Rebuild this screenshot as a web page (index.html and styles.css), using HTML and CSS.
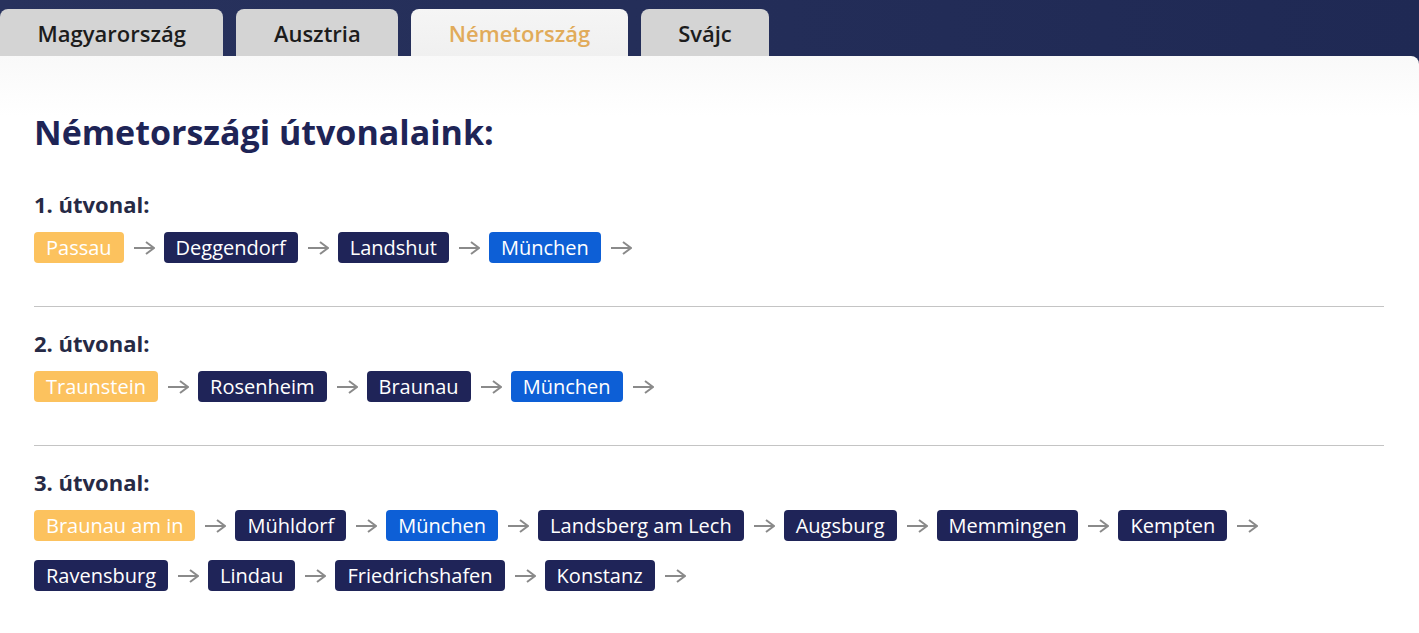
FILE: index.html
```html
<!DOCTYPE html>
<html lang="hu">
<head>
  <meta charset="UTF-8" />
  <title>Útvonalaink</title>
  <link rel="stylesheet" href="styles.css">
</head>
<body>

  <div class="tabs">
    <div class="tab">Magyarország</div>
    <div class="tab">Ausztria</div>
    <div class="tab active">Németország</div>
    <div class="tab">Svájc</div>
  </div>

  <div class="panel">
    <h1>Németországi útvonalaink:</h1>

    <div class="route">
      <h3>1. útvonal:</h3>
      <div class="stops">
        <span class="stop start">Passau</span><svg class="arrow" viewBox="0 0 22 14"><path d="M1 7H21M13 1L21 7L13 13"/></svg>
        <span class="stop">Deggendorf</span><svg class="arrow" viewBox="0 0 22 14"><path d="M1 7H21M13 1L21 7L13 13"/></svg>
        <span class="stop">Landshut</span><svg class="arrow" viewBox="0 0 22 14"><path d="M1 7H21M13 1L21 7L13 13"/></svg>
        <span class="stop hub">München</span><svg class="arrow" viewBox="0 0 22 14"><path d="M1 7H21M13 1L21 7L13 13"/></svg>
      </div>
    </div>

    <div class="route">
      <h3>2. útvonal:</h3>
      <div class="stops">
        <span class="stop start">Traunstein</span><svg class="arrow" viewBox="0 0 22 14"><path d="M1 7H21M13 1L21 7L13 13"/></svg>
        <span class="stop">Rosenheim</span><svg class="arrow" viewBox="0 0 22 14"><path d="M1 7H21M13 1L21 7L13 13"/></svg>
        <span class="stop">Braunau</span><svg class="arrow" viewBox="0 0 22 14"><path d="M1 7H21M13 1L21 7L13 13"/></svg>
        <span class="stop hub">München</span><svg class="arrow" viewBox="0 0 22 14"><path d="M1 7H21M13 1L21 7L13 13"/></svg>
      </div>
    </div>

    <div class="route">
      <h3>3. útvonal:</h3>
      <div class="stops">
        <span class="stop start">Braunau am in</span><svg class="arrow" viewBox="0 0 22 14"><path d="M1 7H21M13 1L21 7L13 13"/></svg>
        <span class="stop">Mühldorf</span><svg class="arrow" viewBox="0 0 22 14"><path d="M1 7H21M13 1L21 7L13 13"/></svg>
        <span class="stop hub">München</span><svg class="arrow" viewBox="0 0 22 14"><path d="M1 7H21M13 1L21 7L13 13"/></svg>
        <span class="stop">Landsberg am Lech</span><svg class="arrow" viewBox="0 0 22 14"><path d="M1 7H21M13 1L21 7L13 13"/></svg>
        <span class="stop">Augsburg</span><svg class="arrow" viewBox="0 0 22 14"><path d="M1 7H21M13 1L21 7L13 13"/></svg>
        <span class="stop">Memmingen</span><svg class="arrow" viewBox="0 0 22 14"><path d="M1 7H21M13 1L21 7L13 13"/></svg>
        <span class="stop">Kempten</span><svg class="arrow" viewBox="0 0 22 14"><path d="M1 7H21M13 1L21 7L13 13"/></svg>
        <span class="stop">Ravensburg</span><svg class="arrow" viewBox="0 0 22 14"><path d="M1 7H21M13 1L21 7L13 13"/></svg>
        <span class="stop">Lindau</span><svg class="arrow" viewBox="0 0 22 14"><path d="M1 7H21M13 1L21 7L13 13"/></svg>
        <span class="stop">Friedrichshafen</span><svg class="arrow" viewBox="0 0 22 14"><path d="M1 7H21M13 1L21 7L13 13"/></svg>
        <span class="stop">Konstanz</span><svg class="arrow" viewBox="0 0 22 14"><path d="M1 7H21M13 1L21 7L13 13"/></svg>
      </div>
    </div>
  </div>

</body>
</html>
```

FILE: styles.css
```css
* { box-sizing: border-box; margin: 0; padding: 0; }
body {
  font-family: 'Open Sans', sans-serif;
  background: linear-gradient(90deg, #28325d, #1f2954);
  color: #1e2456;
  min-height: 100vh;
}

.tabs {
  display: flex;
  gap: 13px;
  padding-top: 9px;
}

.tab {
  height: 47px;
  padding: 0 37.5px;
  display: flex;
  align-items: center;
  background: #d4d4d4;
  border-radius: 8px 8px 0 0;
  font-size: 22px;
  font-weight: 600;
  color: #1c1c1c;
}

.tab.active {
  background: linear-gradient(180deg, #f5f5f5, #f0f0f0);
  color: #e1ab5a;
}

.panel {
  background: linear-gradient(180deg, #f9f9f9 0, #fff 60px);
  border-radius: 0 8px 0 0;
  padding: 54px 35px 40px 34px;
  min-height: 577px;
}

h1 {
  font-size: 34px;
  font-weight: 700;
  color: #1e2456;
  line-height: 44px;
  margin-bottom: 36px;
}

.route {
  padding-bottom: 43px;
  border-bottom: 1px solid #c4c4c4;
  margin-bottom: 22px;
}

.route:last-child {
  border-bottom: none;
}

h3 {
  font-size: 22px;
  font-weight: 700;
  color: #262a45;
  line-height: 28px;
  margin-bottom: 14px;
}

.stops {
  display: flex;
  flex-wrap: wrap;
  align-items: center;
  column-gap: 9px;
  row-gap: 19px;
}

.stop {
  height: 31px;
  padding: 0 12px;
  display: flex;
  align-items: center;
  background: #1f2458;
  color: #fff;
  border-radius: 4px;
  font-size: 20px;
}

.stop.start { background: #fcc25e; }
.stop.hub { background: #0d5fd6; }

.arrow {
  width: 22px;
  height: 14px;
  fill: none;
  stroke: #8a8a8a;
  stroke-width: 2;
}
```
